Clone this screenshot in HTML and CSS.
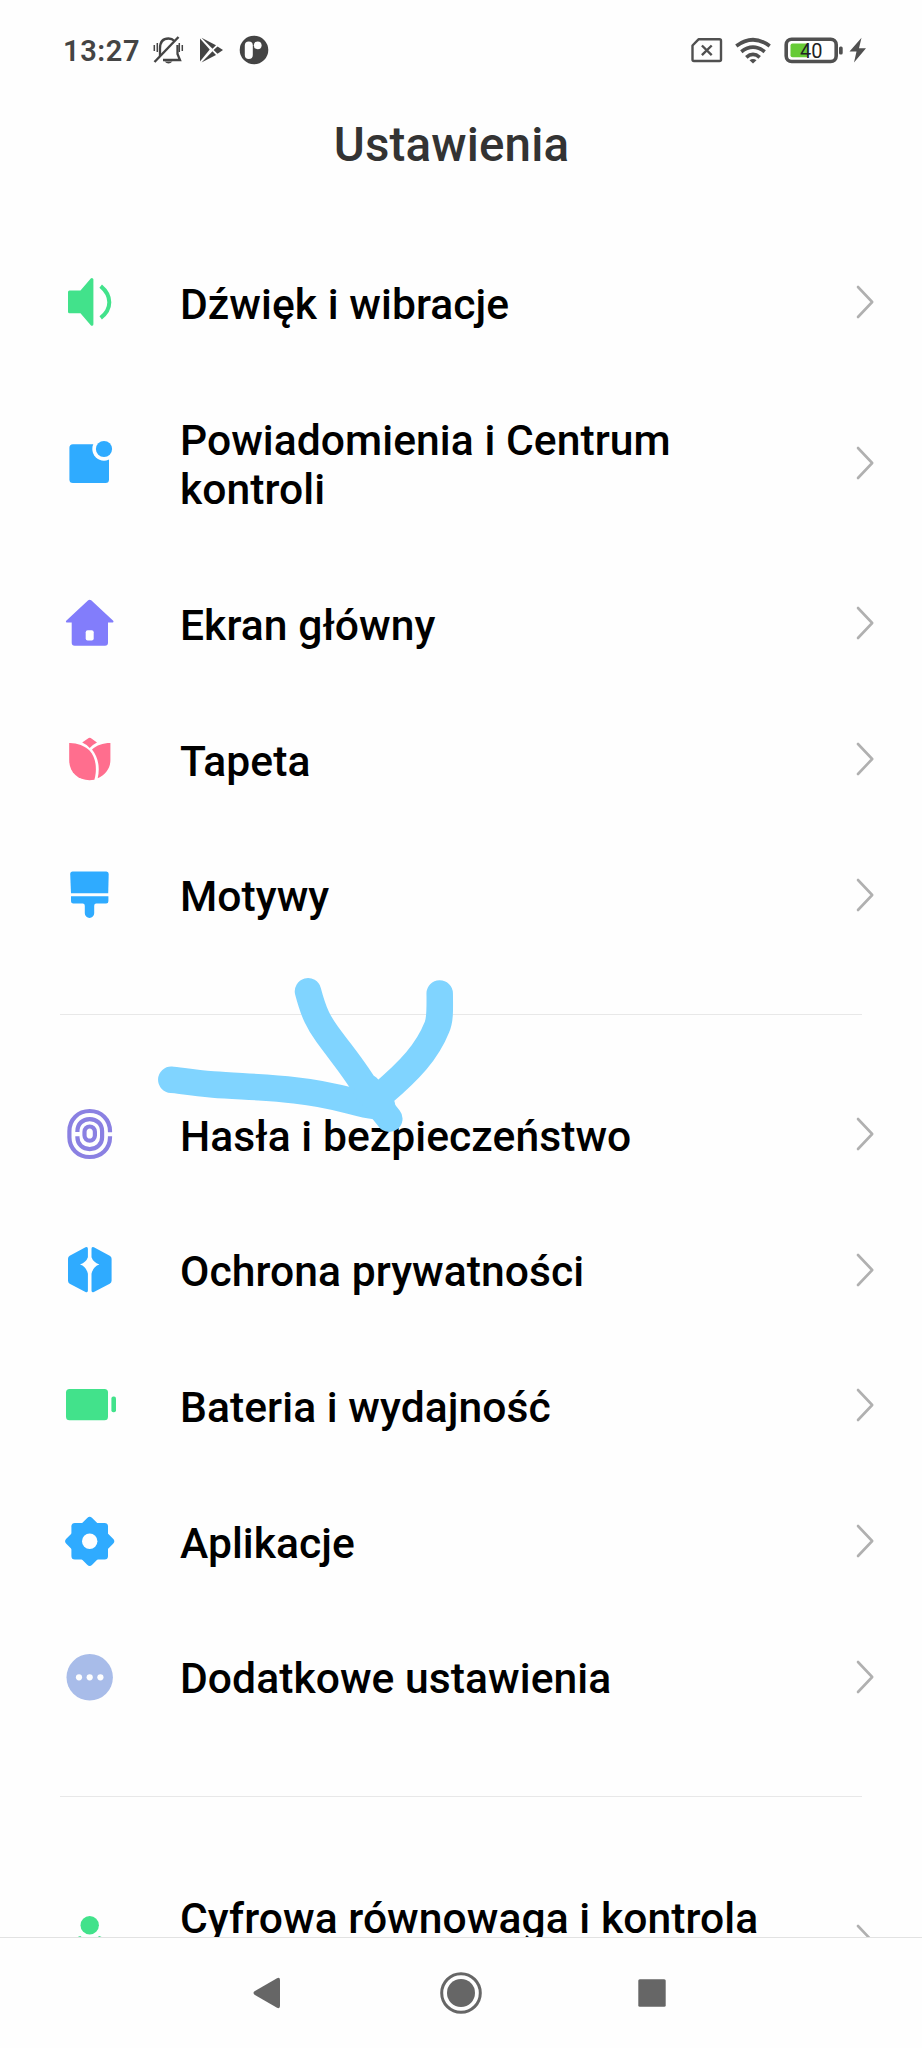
FILE: index.html
```html
<!DOCTYPE html>
<html lang="pl">
<head>
<meta charset="utf-8">
<title>Ustawienia</title>
<link rel="stylesheet" href="styles.css">
</head>
<body>
<div class="screen">
  <header class="status">
    <span class="time">13:27</span>
    <svg class="st-bell" viewBox="152 34 32 32" fill="none" stroke="#444" stroke-width="2.3">
      <path d="M160 56V48.500C160 41 164 38.500 168.500 38.500C171 38.500 173 39.500 174.500 41M177.500 45V54L180 60H163"/>
      <path d="M154.500 62L178.500 37" stroke-width="2.400"/>
      <path d="M154.300 45v6M157.300 43v9M179.300 43v9M182.300 45v6" stroke-width="1.500"/>
      <path d="M164.500 61.500h8q-4 4-8 0z" fill="#444" stroke="none"/>
    </svg>
    <svg class="st-play" viewBox="198 37 26 27" fill="#444">
      <path d="M200 38.500L209.700 49.500L200 61.500z"/>
      <path d="M201.500 37.800L216 45.300L212.500 48.800z"/>
      <path d="M201.500 62.500L216 55L212.500 51.300z"/>
      <path d="M217.500 46.500L223 50L217.500 53.800L213.600 50z"/>
    </svg>
    <svg class="st-p" viewBox="239 35 30 30">
      <circle cx="254" cy="50" r="14.300" fill="#444"/>
      <rect x="244.800" y="41.500" width="8" height="17.500" rx="4" fill="#fefefe"/>
      <circle cx="257.700" cy="45.300" r="3.900" fill="#fefefe"/>
    </svg>
    <span class="spacer"></span>
    <svg class="st-sim" viewBox="691 37 32 26" fill="none" stroke="#505050" stroke-width="2.400">
      <path d="M698.500 39.300H719.500Q721 39.300 721 40.800V59.500Q721 61 719.500 61H694Q692.500 61 692.500 59.500V45.500z" stroke-linejoin="round"/>
      <path d="M701.900 45.500L711.700 55.200M711.700 45.500L701.900 55.200"/>
    </svg>
    <svg class="st-wifi" viewBox="734 35 38 30" fill="none" stroke="#505050" stroke-width="3.700">
      <path d="M736.300 46Q753 33.500 769.700 46M741.300 51.800Q753 42.500 764.700 51.800M746.300 57.300Q753 51.500 759.700 57.300"/>
      <path d="M749.500 60.300q3.500-2.800 7 0l-3.500 3.200z" fill="#505050" stroke="none"/>
    </svg>
    <svg class="st-batt" viewBox="784 36 60 28">
      <rect x="786.200" y="39.200" width="50" height="22.300" rx="5.500" fill="none" stroke="#505050" stroke-width="3.600"/>
      <rect x="790.500" y="43.500" width="17.500" height="13.800" rx="2" fill="#66cb36"/>
      <rect x="839" y="46.500" width="3.700" height="8" rx="1.500" fill="#505050"/>
      <text class="pct" x="811.200" y="57.600" text-anchor="middle">40</text>
    </svg>
    <svg class="st-bolt" viewBox="849 37 18 27" fill="#505050"><path d="M861.500 37.800L849.500 51.500H856.500L854 62.500L866 48.300H859z"/></svg>
  </header>

  <h1 class="title">Ustawienia</h1>

  <main class="list">
    <div class="row">
      <svg class="icon" viewBox="-27.700 -28.300 56 56"><path fill="#42e28b" stroke="#42e28b" stroke-width="3" stroke-linejoin="round" d="M-20.200-10.200H-8.500L2.200-22.700V22L-8.500 9.500H-20.200z"/><path fill="none" stroke="#42e28b" stroke-width="4" d="M11-16.200Q19.600-9 19.600 0T11 15.600"/></svg>
      <span class="label">Dźwięk i wibracje</span>
      <svg class="chev" viewBox="0 0 18 34"><path d="M2 2L16.200 17L2 32"/></svg>
    </div>
    <div class="row tall">
      <svg class="icon" viewBox="-27.700 -28.300 56 56"><rect x="-20.300" y="-19" width="39.600" height="38.700" rx="3.500" fill="#2fabff"/><circle cx="14.300" cy="-14.300" r="11.700" fill="#fefefe"/><circle cx="14.300" cy="-14.300" r="8.100" fill="#2fabff"/></svg>
      <span class="label">Powiadomienia i Centrum<br>kontroli</span>
      <svg class="chev" viewBox="0 0 18 34"><path d="M2 2L16.200 17L2 32"/></svg>
    </div>
    <div class="row">
      <svg class="icon" viewBox="-27.700 -28.300 56 56"><path fill="#827dfb" d="M-1.500-23Q0-24 1.500-23L23.500-2.500Q24.500-1 23-.8H18.300V19.500Q18.300 22.500 15.300 22.500H-15Q-18 22.500-18 19.500V-.8H-23Q-24.500-1-23.500-2.500z"/><rect x="-4" y="7" width="8" height="10.300" rx="2" fill="#fefefe"/></svg>
      <span class="label">Ekran główny</span>
      <svg class="chev" viewBox="0 0 18 34"><path d="M2 2L16.200 17L2 32"/></svg>
    </div>
    <div class="row">
      <svg class="icon" viewBox="-27.700 -28.300 56 56" fill="#ff6e8e"><path d="M-7.500-16.700L-1-21.300Q0-22 1-21.300L7.300-16.700Q3-14.500 0-11.300Q-3-14.700-7.500-16.700z"/><path d="M-20.500-16.300C-13-16.500-5-13.500 0-8.500C6-2 7.800 9 4.700 20.500C-10 23-20.500 14-20.500 1z"/><path d="M20.700-16.300V1C20.700 9 15.500 16 8 19C10.500 8 8.500-2 2.300-9.700C7-14 13-16.300 20.700-16.300z"/></svg>
      <span class="label">Tapeta</span>
      <svg class="chev" viewBox="0 0 18 34"><path d="M2 2L16.200 17L2 32"/></svg>
    </div>
    <div class="row">
      <svg class="icon" viewBox="-27.700 -28.300 56 56" fill="#2fabff"><path d="M-17-23.700H16.700Q19-23.700 19-21.200L18.500-2H-18.700L-19.500-21.200Q-19.500-23.700-17-23.700z"/><path d="M-18.700 .9H18.700V6Q18.700 8.300 16.400 8.300H6.500Q4.500 8.300 4.500 10.500V18A4.700 4.700 0 0 1-4.900 18V10.500Q-4.900 8.300-7 8.300H-16.400Q-18.700 8.300-18.700 6z"/></svg>
      <span class="label">Motywy</span>
      <svg class="chev" viewBox="0 0 18 34"><path d="M2 2L16.200 17L2 32"/></svg>
    </div>

    <div class="divider"></div>

    <div class="row">
      <svg class="icon" viewBox="-27.700 -28.300 56 56" fill="none" stroke="#8a80e2" stroke-width="4.200"><path d="M20.300-2V-3C20.300-15 11.500-23.300 0-23.300S-20.300-15-20.300-3V3C-20.300 14.500-11.500 22.700 0 22.700S20.300 14.500 20.300 3V2"/><path d="M-12.300-2.300V-3C-12.300-10.500-7-15.200 0-15.200S12.400-10.500 12.400-3V3C12.400 10 7 14.800 0 14.800S-12.300 10-12.300 3V2"/><rect x="-5.200" y="-7.800" width="10.400" height="14.200" rx="5.200"/></svg>
      <span class="label">Hasła i bezpieczeństwo</span>
      <svg class="chev" viewBox="0 0 18 34"><path d="M2 2L16.200 17L2 32"/></svg>
    </div>
    <div class="row">
      <svg class="icon" viewBox="-27.700 -28.300 56 56" fill="#2fabff"><path d="M-1.800-21.500Q-1.800-24-4.200-23L-20-14.500Q-21.700-13.500-21.700-11.500V10.500Q-21.700 12.500-20 13.500L-4.200 21.700Q-1.800 22.700-1.800 20.300V3.500Q-3.500-4-9.700-5.800Q-3.500-8-1.800-13z"/><path d="M1.800-21.500Q1.800-24 4.200-23L20-14.500Q21.900-13.500 21.900-11.500V10.500Q21.900 12.500 20 13.500L4.200 21.700Q1.800 22.700 1.800 20.300V3.500Q3.500-4 9.700-5.800Q3.500-8 1.800-13z"/></svg>
      <span class="label">Ochrona prywatności</span>
      <svg class="chev" viewBox="0 0 18 34"><path d="M2 2L16.200 17L2 32"/></svg>
    </div>
    <div class="row">
      <svg class="icon" viewBox="-27.700 -28.300 56 56" fill="#42e28b"><rect x="-23.700" y="-16.300" width="42" height="31.200" rx="3.500"/><rect x="21.700" y="-8.700" width="4.600" height="15.700" rx="2"/></svg>
      <span class="label">Bateria i wydajność</span>
      <svg class="chev" viewBox="0 0 18 34"><path d="M2 2L16.200 17L2 32"/></svg>
    </div>
    <div class="row">
      <svg class="icon" viewBox="-27.700 -28.300 56 56" fill="#2fabff"><rect x="-18.300" y="-18.300" width="36.600" height="36.600" rx="3.500"/><rect x="-18.300" y="-18.300" width="36.600" height="36.600" rx="3.500" transform="rotate(45)"/><circle r="7.700" fill="#fefefe"/></svg>
      <span class="label">Aplikacje</span>
      <svg class="chev" viewBox="0 0 18 34"><path d="M2 2L16.200 17L2 32"/></svg>
    </div>
    <div class="row">
      <svg class="icon" viewBox="-27.700 -28.300 56 56"><circle r="23.200" fill="#a8bce9"/><g fill="#fefefe"><circle cx="-10.700" r="3.100"/><circle r="3.100"/><circle cx="10.700" r="3.100"/></g></svg>
      <span class="label">Dodatkowe ustawienia</span>
      <svg class="chev" viewBox="0 0 18 34"><path d="M2 2L16.200 17L2 32"/></svg>
    </div>

    <div class="divider"></div>

    <div class="row tall">
      <svg class="icon" viewBox="-27.700 -28.300 56 56" fill="#42e28b"><circle cy="-16" r="9.200"/><path d="M-9.500-5.200Q0 1.500 9.500-5.200Q18-3 18 8V20H-18V8Q-18-3-9.500-5.200z"/></svg>
      <span class="label">Cyfrowa równowaga i kontrola<br>&nbsp;</span>
      <svg class="chev" viewBox="0 0 18 34"><path d="M2 2L16.200 17L2 32"/></svg>
    </div>
  </main>

  <nav class="nav">
    <svg class="nav-back" viewBox="0 0 28 32"><path d="M1.500 14.300L24 1.200Q27 0 27 3V29Q27 32 24 30.800L1.500 17.700Q-.5 16 1.500 14.300z"/></svg>
    <svg class="nav-home" viewBox="-21 -21 42 42"><circle r="14"/><circle r="19.300" fill="none" stroke="#666" stroke-width="3"/></svg>
    <svg class="nav-recent" viewBox="0 0 28 28"><rect x=".3" y=".3" width="27.400" height="27.400" rx="1.500"/></svg>
  </nav>

  <svg class="doodle" viewBox="150 970 310 170">
    <path d="M171.300 1079.700C178 1080 190 1082.500 213 1084.500C240 1086.500 268 1087 295 1090.300C340 1095 355 1104 375 1106"/>
    <path d="M308 991.300C314 1014 319 1023 327 1034C343 1056 357 1072 368 1092L389.300 1118.700"/>
    <path d="M439.700 993.500C440 1012 440 1020 437 1027C427 1052 410 1070 382 1094L375 1101"/>
    <path d="M368 1088L382 1106"/>
  </svg>
</div>
</body>
</html>
```
FILE: styles.css
```css
* { box-sizing: border-box; }

body {
  margin: 0;
  background: #fefefe;
  font-family: Roboto, "Noto Sans", sans-serif;
}

.screen {
  position: relative;
  display: flex;
  flex-direction: column;
  width: 922px;
  height: 2048px;
  overflow: hidden;
  background: #fefefe;
}

svg { display: block; flex: none; }

/* status bar */
.status {
  display: flex;
  align-items: center;
  flex: none;
  height: 100px;
  padding: 0 55px 0 63px;
}
.time {
  width: 89px;
  font-size: 29px;
  font-weight: 600;
  letter-spacing: 0.6px;
  line-height: 34px;
  padding-top: 2px;
  color: #444;
  white-space: nowrap;
}
.spacer { flex: 1; }
.st-bell { width: 32px; height: 32px; margin-right: 14px; }
.st-play { width: 26px; height: 27px; margin-right: 15px; }
.st-p { width: 30px; height: 30px; }
.st-sim { width: 32px; height: 26px; margin-right: 11px; }
.st-wifi { width: 38px; height: 30px; margin-right: 12px; }
.st-batt { width: 60px; height: 28px; margin-right: 5px; }
.st-bolt { width: 18px; height: 27px; }
.pct { font-size: 20px; fill: #222; }

/* page title */
.title {
  flex: none;
  height: 134.600px;
  margin: 0;
  padding: 17px 19px 0 0;
  font-size: 47.500px;
  font-weight: 500;
  letter-spacing: 0.150px;
  line-height: 56px;
  text-align: center;
  color: #333;
}

/* settings list */
.list {
  flex: 1;
  min-height: 0;
  overflow: hidden;
}
.row {
  display: flex;
  align-items: center;
  height: 135.600px;
  padding: 0 48px 0 62px;
}
.row.tall { height: 185.400px; }
.icon { width: 56px; height: 56px; margin-right: 62px; }
.label {
  flex: 1;
  padding-top: 5px;
  font-size: 42.600px;
  font-weight: 500;
  letter-spacing: 0.060px;
  line-height: 49.800px;
  color: #000;
  white-space: nowrap;
}
.chev {
  width: 18px;
  height: 34px;
  fill: none;
  stroke: #b0b0b0;
  stroke-width: 2.600px;
  stroke-linecap: round;
  stroke-linejoin: round;
}
.divider {
  height: 1.500px;
  margin: 51.300px 60px;
  background: #e8e8e8;
}

/* navigation bar */
.nav {
  display: flex;
  align-items: center;
  flex: none;
  height: 111px;
  padding-left: 253px;
  border-top: 1px solid #e2e2e2;
  fill: #666;
}
.nav-back { width: 28px; height: 32px; margin-right: 158.500px; }
.nav-home { width: 42px; height: 42px; margin-right: 156.500px; }
.nav-recent { width: 28px; height: 28px; }

/* hand-drawn arrow over the list */
.doodle {
  position: absolute;
  left: 150px;
  top: 970px;
  width: 310px;
  height: 170px;
  fill: none;
  stroke: #80d4ff;
  stroke-width: 26.500px;
  stroke-linecap: round;
  stroke-linejoin: round;
}
```
